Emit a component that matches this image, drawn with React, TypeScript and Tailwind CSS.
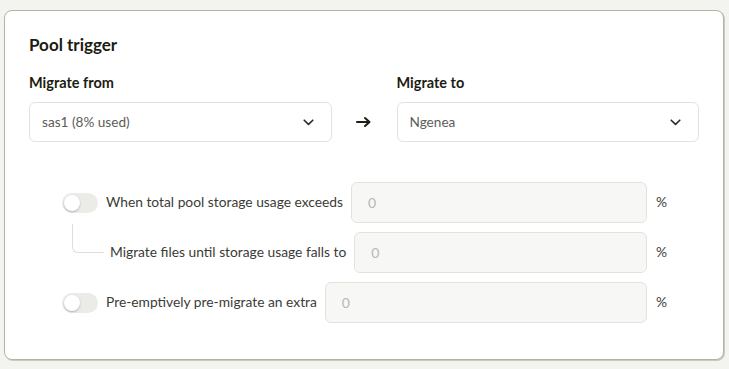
import React, { useState } from 'react';

const ChevronDown = () => (
    <svg width="11" height="7" viewBox="0 0 11 7" fill="none">
        <path d="M1.2 1.2L5.5 5.4L9.8 1.2" stroke="#2b2b22" strokeWidth="1.6" strokeLinecap="round" strokeLinejoin="round" />
    </svg>
);

const ArrowRight = () => (
    <svg width="16" height="12" viewBox="0 0 16 12" fill="none">
        <path d="M1 6H13" stroke="#1f1f16" strokeWidth="2" strokeLinecap="round" />
        <path d="M9 2L13.5 6L9 10" stroke="#1f1f16" strokeWidth="2" strokeLinecap="round" strokeLinejoin="round" />
    </svg>
);

const Toggle = ({ on, onClick }: { on: boolean; onClick: () => void }) => (
    <button
        type="button"
        onClick={onClick}
        className={`relative shrink-0 w-[36px] h-[20px] rounded-full ${on ? 'bg-[#2b2b22]' : 'bg-[#ebebe7]'}`}
    >
        <span
            className={`absolute top-[2px] w-[16px] h-[16px] rounded-full bg-white shadow-[0_1px_2px_rgba(0,0,0,0.25)] ${on ? 'left-[18px]' : 'left-[2px]'}`}
        />
    </button>
);

const Select = ({ value }: { value: string }) => (
    <div className="flex items-center justify-between h-[40px] pl-3 pr-[17px] bg-white border border-[#e3e3de] rounded-md">
        <span className="text-[13.6px] text-[#5c5c58]">{value}</span>
        <ChevronDown />
    </div>
);

const NumberInput = () => (
    <input
        type="text"
        placeholder="0"
        className="flex-1 min-w-0 h-[41px] px-4 bg-[#f7f7f5] border border-[#e3e3de] rounded-md text-[14px] text-[#3a3a36] placeholder:text-[#b8b8b4] outline-none"
    />
);

const App: React.FC = () => {
    const [exceeds, setExceeds] = useState(false);
    const [preMigrate, setPreMigrate] = useState(false);

    return (
        <div className="min-h-screen bg-[#f3f3f0] pt-[10px] pl-[4px]" style={{ fontFamily: 'Lato, "Liberation Sans", sans-serif' }}>
            <div className="w-[720px] h-[350px] bg-white border border-[#b4b4a6] rounded-lg shadow-[1px_1px_0_#c9c9bd] px-6 pt-6">
                <h2 className="text-[17px] leading-[20px] font-bold text-[#1c1c12]">Pool trigger</h2>

                <div className="flex items-end mt-[18px]">
                    <div className="flex-1">
                        <label className="block text-[14.5px] leading-[20px] font-bold text-[#1c1c12] mb-[9px]">Migrate from</label>
                        <Select value="sas1 (8% used)" />
                    </div>
                    <div className="w-[65px] h-[40px] flex items-center justify-center">
                        <ArrowRight />
                    </div>
                    <div className="flex-1">
                        <label className="block text-[14.5px] leading-[20px] font-bold text-[#1c1c12] mb-[9px]">Migrate to</label>
                        <Select value="Ngenea" />
                    </div>
                </div>

                <div className="mt-10 pl-[33px] pr-8 flex flex-col gap-[9px] text-[13.8px] text-[#3b3b36]">
                    <div className="flex items-center">
                        <Toggle on={exceeds} onClick={() => setExceeds(!exceeds)} />
                        <span className="ml-2 mr-2 whitespace-nowrap">When total pool storage usage exceeds</span>
                        <NumberInput />
                        <span className="ml-[9px]">%</span>
                    </div>
                    <div className="flex items-center">
                        <div className="self-start -mt-[8px] ml-[10px] w-[32px] h-[29px] border-l border-b border-[#dededa] rounded-bl-md shrink-0" />
                        <span className="ml-[6px] mr-2 whitespace-nowrap">Migrate files until storage usage falls to</span>
                        <NumberInput />
                        <span className="ml-[9px]">%</span>
                    </div>
                    <div className="flex items-center">
                        <Toggle on={preMigrate} onClick={() => setPreMigrate(!preMigrate)} />
                        <span className="ml-2 mr-2 whitespace-nowrap">Pre-emptively pre-migrate an extra</span>
                        <NumberInput />
                        <span className="ml-[9px]">%</span>
                    </div>
                </div>
            </div>
        </div>
    );
};

export default App;
